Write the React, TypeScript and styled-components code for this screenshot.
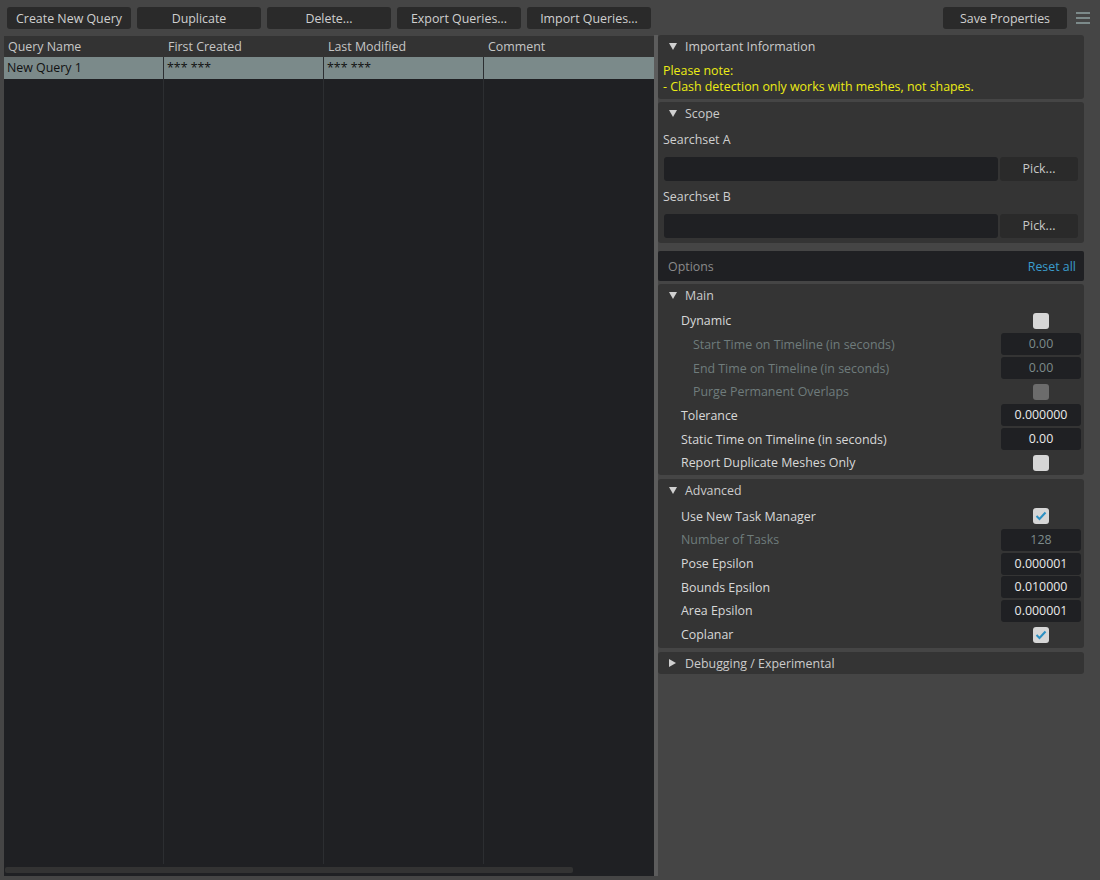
import styled, { createGlobalStyle } from 'styled-components';

const GlobalStyle = createGlobalStyle`
  html, body {
    margin: 0;
    padding: 0;
    background: #454545;
    font-family: "Open Sans", "Noto Sans", sans-serif;
    font-size: 12.4px;
    font-weight: 500;
  }
`

const Page = styled.div`
  width: 1100px;
  height: 880px;
  display: flex;
  flex-direction: column;
  background: #454545;
  overflow: hidden;
`

const Toolbar = styled.div`
  display: flex;
  align-items: center;
  gap: 6px;
  padding: 7px 10px 0 7px;
  height: 22px;
`

const ToolButton = styled.button`
  width: 124px;
  height: 22px;
  border: none;
  border-radius: 3px;
  background: #2a2a2a;
  color: #cfcfcf;
  font-family: inherit;
  font-size: inherit;
  font-weight: inherit;
  padding: 0;
`

const Spacer = styled.div`
  flex: 1;
`

const Burger = styled.div`
  display: flex;
  flex-direction: column;
  gap: 3px;
  margin-left: 3px;
  span {
    display: block;
    width: 14px;
    height: 2px;
    background: #7c8a8a;
  }
`

const Main = styled.div`
  flex: 1;
  display: flex;
  padding: 6px 0 4px 4px;
  min-height: 0;
`

const Table = styled.div`
  width: 650px;
  margin-top: 1px;
  display: flex;
  flex-direction: column;
  background: #1f2023;
`

const Grid = styled.div`
  flex: 1;
  display: grid;
  grid-template-columns: 160px 160px 160px 1fr;
  grid-template-rows: 21px 22px 1fr;
`

const HeadCell = styled.div`
  background: #333333;
  color: #c6c6c6;
  padding-left: 4px;
  line-height: 21px;
`

const Cell = styled.div<{ $last?: boolean }>`
  background: #7b8a8a;
  color: #111;
  padding-left: 3px;
  line-height: 22px;
  border-right: ${p => (p.$last ? 'none' : '1px solid #2c2e31')};
`

const FillCell = styled.div<{ $last?: boolean }>`
  border-right: ${p => (p.$last ? 'none' : '1px solid #2c2e31')};
`

const ScrollTrack = styled.div`
  height: 12px;
  padding: 3px 0 0 1px;
  box-sizing: border-box;
  div {
    width: 568px;
    height: 6px;
    border-radius: 2px;
    background: #333333;
  }
`

const Splitter = styled.div`
  width: 4px;
  background: #5c5c5c;
`

const Panel = styled.div`
  width: 426px;
  display: flex;
  flex-direction: column;
`

const Section = styled.div<{ $gap?: number; $pad?: number }>`
  background: #343434;
  border-radius: 3px;
  margin-top: ${p => p.$gap ?? 0}px;
  padding-bottom: ${p => p.$pad ?? 0}px;
`

const SectionHead = styled.div`
  height: 22px;
  display: flex;
  align-items: center;
  padding-left: 11px;
  color: #cbcbcb;
  gap: 8px;
`

const Arrow = styled.span<{ $open?: boolean }>`
  width: 0;
  height: 0;
  ${p =>
    p.$open
      ? `border-left: 4px solid transparent;
         border-right: 4px solid transparent;
         border-top: 7px solid #d0d0d0;`
      : `border-top: 4px solid transparent;
         border-bottom: 4px solid transparent;
         border-left: 7px solid #d0d0d0;
         margin-right: 1px;`}
`

const Note = styled.div`
  color: #ecec14;
  padding: 6px 5px 0;
  line-height: 16px;
`

const ScopeLabel = styled.div`
  color: #cfcfcf;
  padding: 5px 5px 0;
  height: 22px;
  line-height: 22px;
`

const PickRow = styled.div`
  display: flex;
  gap: 2px;
  padding: 6px 6px 0 6px;
`

const PathBox = styled.div`
  flex: 1;
  height: 24px;
  border-radius: 3px;
  background: #1f2023;
`

const PickButton = styled.div`
  width: 78px;
  height: 24px;
  border-radius: 3px;
  background: #2a2a2a;
  color: #c8c8c8;
  text-align: center;
  line-height: 24px;
`

const OptionsBar = styled.div`
  margin-top: 8px;
  height: 30px;
  background: #1f2023;
  border-radius: 2px;
  display: flex;
  align-items: center;
  justify-content: space-between;
  padding: 0 8px 0 10px;
  color: #8a8a8a;
  span {
    color: #3a9ccc;
  }
`

const Rows = styled.div`
  padding-top: 3px;
`

const Row = styled.div<{ $indent: number; $dim?: boolean }>`
  height: 23.65px;
  display: flex;
  align-items: center;
  padding-left: ${p => p.$indent}px;
  padding-right: 3px;
  color: ${p => (p.$dim ? '#6f7c7c' : '#d8d8d8')};
`

const Label = styled.div`
  flex: 1;
`

const ValueBox = styled.div<{ $dim?: boolean }>`
  width: 80px;
  height: 22px;
  border-radius: 3px;
  background: #1f2023;
  color: ${p => (p.$dim ? '#7d8b8b' : '#eaeaea')};
  text-align: center;
  line-height: 22px;
`

const CheckCell = styled.div`
  width: 80px;
  display: flex;
  justify-content: center;
`

const Check = styled.div<{ $dim?: boolean }>`
  width: 16px;
  height: 16px;
  border-radius: 3px;
  background: ${p => (p.$dim ? '#6c6c6c' : '#d6d6d6')};
  display: flex;
  align-items: center;
  justify-content: center;
`

type Opt = {
  label: string;
  indent: number;
  dim?: boolean;
  value?: string;
  check?: boolean;
};

const mainOpts: Opt[] = [
  { label: 'Dynamic', indent: 23, check: false },
  { label: 'Start Time on Timeline (in seconds)', indent: 35, dim: true, value: '0.00' },
  { label: 'End Time on Timeline (in seconds)', indent: 35, dim: true, value: '0.00' },
  { label: 'Purge Permanent Overlaps', indent: 35, dim: true, check: false },
  { label: 'Tolerance', indent: 23, value: '0.000000' },
  { label: 'Static Time on Timeline (in seconds)', indent: 23, value: '0.00' },
  { label: 'Report Duplicate Meshes Only', indent: 23, check: false },
];

const advOpts: Opt[] = [
  { label: 'Use New Task Manager', indent: 23, check: true },
  { label: 'Number of Tasks', indent: 23, dim: true, value: '128' },
  { label: 'Pose Epsilon', indent: 23, value: '0.000001' },
  { label: 'Bounds Epsilon', indent: 23, value: '0.010000' },
  { label: 'Area Epsilon', indent: 23, value: '0.000001' },
  { label: 'Coplanar', indent: 23, check: true },
];

const OptionRow = ({ opt }: { opt: Opt }) => (
  <Row $indent={opt.indent} $dim={opt.dim}>
    <Label>{opt.label}</Label>
    {opt.value !== undefined ? (
      <ValueBox $dim={opt.dim}>{opt.value}</ValueBox>
    ) : (
      <CheckCell>
        <Check $dim={opt.dim}>
          {opt.check && (
            <svg width="12" height="10" viewBox="0 0 12 10">
              <polyline points="1.5,5 4.5,8 10.5,1.5" fill="none" stroke="#2b8fc2" strokeWidth="2" />
            </svg>
          )}
        </Check>
      </CheckCell>
    )}
  </Row>
);

const columns = ['Query Name', 'First Created', 'Last Modified', 'Comment'];
const rowData = ['New Query 1', '*** ***', '*** ***', ''];

const App = () => {
  return (
    <Page>
      <GlobalStyle />
      <Toolbar>
        <ToolButton>Create New Query</ToolButton>
        <ToolButton>Duplicate</ToolButton>
        <ToolButton>Delete...</ToolButton>
        <ToolButton>Export Queries...</ToolButton>
        <ToolButton>Import Queries...</ToolButton>
        <Spacer />
        <ToolButton>Save Properties</ToolButton>
        <Burger>
          <span />
          <span />
          <span />
        </Burger>
      </Toolbar>
      <Main>
        <Table>
          <Grid>
            {columns.map(c => (
              <HeadCell key={c}>{c}</HeadCell>
            ))}
            {rowData.map((v, i) => (
              <Cell key={i} $last={i === 3}>{v}</Cell>
            ))}
            {columns.map((c, i) => (
              <FillCell key={c} $last={i === 3} />
            ))}
          </Grid>
          <ScrollTrack>
            <div />
          </ScrollTrack>
        </Table>
        <Splitter />
        <Panel>
          <Section $pad={4}>
            <SectionHead>
              <Arrow $open />
              Important Information
            </SectionHead>
            <Note>
              Please note:
              <br />- Clash detection only works with meshes, not shapes.
            </Note>
          </Section>
          <Section $gap={3} $pad={5}>
            <SectionHead>
              <Arrow $open />
              Scope
            </SectionHead>
            <ScopeLabel>Searchset A</ScopeLabel>
            <PickRow>
              <PathBox />
              <PickButton>Pick...</PickButton>
            </PickRow>
            <ScopeLabel>Searchset B</ScopeLabel>
            <PickRow>
              <PathBox />
              <PickButton>Pick...</PickButton>
            </PickRow>
          </Section>
          <OptionsBar>
            Options
            <span>Reset all</span>
          </OptionsBar>
          <Section $gap={3} $pad={1}>
            <SectionHead>
              <Arrow $open />
              Main
            </SectionHead>
            <Rows>
              {mainOpts.map(o => (
                <OptionRow key={o.label} opt={o} />
              ))}
            </Rows>
          </Section>
          <Section $gap={4} $pad={2}>
            <SectionHead>
              <Arrow $open />
              Advanced
            </SectionHead>
            <Rows>
              {advOpts.map(o => (
                <OptionRow key={o.label} opt={o} />
              ))}
            </Rows>
          </Section>
          <Section $gap={4}>
            <SectionHead>
              <Arrow />
              Debugging / Experimental
            </SectionHead>
          </Section>
        </Panel>
      </Main>
    </Page>
  );
}

export default App;
